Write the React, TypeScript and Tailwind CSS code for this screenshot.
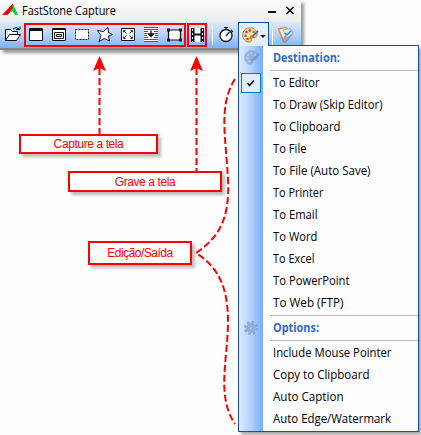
import type { ReactNode } from "react";

function Icon({ children, w = 23 }: { children: ReactNode; w?: number }) {
  return (
    <svg width={w} height={26} viewBox={`0 0 ${w} 26`} fill="none" stroke="#111" className="block shrink-0">
      {children}
    </svg>
  );
}

const destinations = [
  { label: "To Editor", len: 46.5 },
  { label: "To Draw (Skip Editor)", len: 109.5 },
  { label: "To Clipboard", len: 67.5 },
  { label: "To File", len: 33.5 },
  { label: "To File (Auto Save)", len: 97.5 },
  { label: "To Printer", len: 50.5 },
  { label: "To Email", len: 44.5 },
  { label: "To Word", len: 44.5 },
  { label: "To Excel", len: 41.5 },
  { label: "To PowerPoint", len: 76.5 },
  { label: "To Web (FTP)", len: 70.5 },
];

const options = [
  { label: "Include Mouse Pointer", len: 118.5 },
  { label: "Copy to Clipboard", len: 96.5 },
  { label: "Auto Caption", len: 70.5 },
  { label: "Auto Edge/Watermark", len: 118 },
];

function Label({ text, len, bold = false }: { text: string; len: number; bold?: boolean }) {
  return (
    <svg width={140} height={22} className="block">
      <text x={0} y={15} textLength={len} lengthAdjust="spacingAndGlyphs" fill={bold ? "#316ac5" : "#000"} fontSize={12} fontWeight={bold ? 700 : 400}>
        {text}
      </text>
    </svg>
  );
}

function Palette({ muted = false }: { muted?: boolean }) {
  const spot = (color: string) => (muted ? "#a9c6ea" : color);
  return (
    <g opacity={muted ? 0.6 : 1}>
      <path
        d="M8 .8C3.500.8.700 4 .700 8c0 4.200 3 7 6.300 7 2.200 0 2.600-1 2.300-2.400-.2-1.300.6-2 1.700-1.900 2.600.2 4-1.200 4-3.500C15 3.500 12.200.8 8 .8Z"
        fill={muted ? "#7f9dc6" : "#fbe08d"}
        stroke={muted ? "#7695bf" : "#c4703a"}
      />
      <g stroke="none">
        <circle cx="4.500" cy="5" r="1.300" fill={spot("#e63c27")} />
        <circle cx="8" cy="3.500" r="1.300" fill={spot("#8a41c7")} />
        <circle cx="11.800" cy="5" r="1.300" fill={spot("#45a63c")} />
        <circle cx="3.500" cy="8.800" r="1.300" fill={spot("#3281d2")} />
        <circle cx="5.500" cy="12" r="1.300" fill={spot("#e63c27")} />
      </g>
      <path d="m10 10 6-6" stroke={muted ? "#5c7ba4" : "#5458bb"} strokeWidth="1.700" />
      <path d="m7.500 11.500 1.500-3 2.500 2Z" fill={muted ? "#5c7ba4" : "#ee8427"} stroke={muted ? "#5c7ba4" : "#d85f17"} strokeWidth=".8" />
    </g>
  );
}

function CaptureWindow() {
  return (
    <div className="h-[50px] w-[301px] bg-white shadow-[3px_3px_3px_#999]">
      <div className="flex h-[22px] items-center bg-gradient-to-b from-[#fcfcfc] to-[#ededed]">
        <svg width="22" height="22" className="block">
          <path d="M2 15 13 3.500v5L7.500 15Z" fill="#f00000" />
          <path d="m13 4 5 11h-3l-2.500-4-2 2 1.500-4Z" fill="#08d52b" />
        </svg>
        <svg width="240" height="22" className="block">
          <text x="0" y="14.500" fontSize="12" textLength="94" lengthAdjust="spacingAndGlyphs">FastStone Capture</text>
        </svg>
        <svg width="39" height="22" className="block" stroke="#111" strokeWidth="2">
          <path d="M6 12h8" />
          <path d="m24.500 7 7 7m0-7-7 7" strokeWidth="1.600" />
        </svg>
      </div>
      <div className="flex h-[28px] border-b-2 border-[#858585] bg-gradient-to-b from-[#dceaff] via-[#b6d2fb] to-[#7fb1f6] pl-px">
        <Icon>
          <path d="M4.500 18.500v-11h5l2 2h5v3" fill="#fff" />
          <path d="m4.500 18.500 4-6h11l-4 6Z" fill="#fff" />
          <path d="M12 7q3-3 6 0m-3 .5h4v-3" />
        </Icon>
        <Icon>
          <path d="M5.500 6.500h13v12h-13z" fill="#fff" />
          <path d="M5 7.500h14M5 8.500h14" />
        </Icon>
        <Icon>
          <path d="M5.500 6.500h13v12h-13z" fill="#fff" />
          <path d="M5 7.500h14M7.500 10.500h9v6h-9zM9.500 12.500h5v2h-5z" />
        </Icon>
        <Icon>
          <path d="M5.500 7.500h13v10h-13z" fill="#fff" strokeDasharray="2 1" />
        </Icon>
        <Icon>
          <path d="m4.500 8.500 6 1 4.500-4 .5 5 4 2-4 1.500 1 5-5-2.500-5.500 3 2-6Z" fill="#fff" />
        </Icon>
        <Icon>
          <path d="M5.500 6.500h13v12h-13z" fill="#fff" />
          <path d="M7.500 10.500v-2h2m5 0h2v2m0 4v2h-2m-5 0h-2v-2M8 9l2.500 2.500M16 9l-2.500 2.500M8 16l2.500-2.500M16 16l-2.500-2.500" strokeWidth=".85" />
        </Icon>
        <Icon>
          <path d="M5 5h14v15H5z" fill="#fff" stroke="none" />
          <path d="M5 5.500h14M5 7.500h14M5 9.500h4m6 0h4M5 11.500h3m8 0h3M5 13.500h3m8 0h3M5 15.500h4m6 0h4M5 17.500h14M5 19.500h14" strokeWidth=".7" />
          <path d="M12 8.500V13m-2.500-1 2.500 2.500 2.500-2.500Z" fill="#111" strokeWidth="1.300" />
        </Icon>
        <Icon>
          <path d="M6.500 8h12v10h-12z" fill="#fff" strokeWidth="1.200" />
          <path d="M5 6.500h3v3H5zm12 0h3v3h-3zM5 16.500h3v3H5zm12 0h3v3h-3z" fill="#111" stroke="none" />
        </Icon>
        <Icon>
          <path d="M6 6h13v14H6z" fill="#111" stroke="none" />
          <path d="M9.500 6h6v5.500h-6zm0 7.500h6V20h-6z" fill="#fff" stroke="none" />
          <path d="M7.500 7v13m10-13v13" stroke="#fff" strokeDasharray="2 2" />
        </Icon>
        <Icon w={7}><path d="M4.500 4v19" stroke="#fff" /></Icon>
        <Icon>
          <circle cx="11" cy="13.500" r="6" fill="#fff" strokeWidth="1.300" />
          <path d="M9 5.500h4M11 6v2m0 6 3.500-4m1.500-2 2 2" strokeWidth="1.200" />
        </Icon>
        <div className="h-[26px] w-[31px] border-x border-t border-[#1c4c9c] bg-[#e2effd]">
          <svg width="29" height="25" className="block">
            <g transform="translate(3 4)" fill="none"><Palette /></g>
            <path d="M21 12h6l-3 3Z" fill="#111" />
          </svg>
        </div>
        <Icon w={6}><path d="M3.500 4v19" stroke="#fff" /></Icon>
        <Icon>
          <path d="m3.500 7 5 13h2.500l7-9-2.500-4-4 1-2-2Z" fill="#b49ade" stroke="#9a72bd" />
          <path d="m3.500 7 4.500 10 7-7.500-4.500-4Z" fill="#e5f3ff" stroke="#ee8b1e" strokeWidth="1.200" />
          <path d="m8 8 7-1.500L18 11l-6 5Z" fill="#d3ecff" stroke="#7aabe9" strokeWidth=".8" />
          <path d="m10 11 2 2 4-4" stroke="#238fa3" strokeWidth="1.400" />
        </Icon>
      </div>
    </div>
  );
}

function Menu() {
  return (
    <div className="absolute left-[238px] top-[45px] flex h-[387px] w-[181px] border border-[#1c4c9c] bg-[#fdfdfd] shadow-[3px_3px_3px_#aaa]">
      <div className="w-[24px] shrink-0 bg-gradient-to-r from-[#dceaff] via-[#b5d2fb] to-[#74adf9]">
        <svg width="24" height="385" className="block" fill="none">
          <g transform="translate(5 4) scale(.94)"><Palette muted /></g>
          <rect x="2.500" y="27.500" width="19" height="19" fill="#e1eef9" stroke="#0078d7" />
          <path d="m8.500 37 2 2.500 4.500-5" stroke="#111" strokeWidth="1.500" />
          <g transform="translate(12 282)" stroke="#86a7d2">
            <circle r="6" strokeWidth="2" strokeDasharray="2.700 2" />
            <circle r="4.200" fill="#93b5e3" strokeWidth="1.200" />
            <circle r="1.800" fill="#abc9f0" />
          </g>
        </svg>
      </div>
      <div className="flex min-w-0 flex-1 flex-col pl-[7px]">
        <div className="h-[24px] pl-[3px] pt-px"><Label text="Destination:" len={67} bold /></div>
        <div className="border-t border-[#bababa] pb-px pt-px">
          {destinations.map((d) => <div key={d.label} className="h-[22px] pl-[3px]"><Label text={d.label} len={d.len} /></div>)}
        </div>
        <div className="h-[26px] border-y border-[#bababa] pl-[3px] pt-px"><Label text="Options:" len={46} bold /></div>
        <div className="pt-px">
          {options.map((d) => <div key={d.label} className="h-[22px] pl-[3px]"><Label text={d.label} len={d.len} /></div>)}
        </div>
      </div>
      <div className="absolute left-0 top-[-1px] h-px w-[29px] bg-[#e2effd]" />
    </div>
  );
}

export default function App() {
  return (
    <main className="relative h-[435px] w-[421px] overflow-hidden bg-[#fdfdfd] font-['Open_Sans','Noto_Sans',sans-serif]">
      <CaptureWindow />
      <div className="absolute left-[24px] top-[23px] h-[24px] w-[162px] border-2 border-[#f00]" />
      <div className="absolute left-[187px] top-[23px] h-[24px] w-[20px] border-2 border-[#f00]" />
      <svg className="absolute left-0 top-0" width="421" height="435" fill="none" stroke="#f00" strokeWidth="2" strokeDasharray="7 3">
        <path d="M99.500 68v66M196.500 68v103" />
        <path d="M235 79C218 106 226 137 228 180 230 220 218 238 196 253 219 267 228 289 228 321 228 359 216 396 235 424" />
        <g fill="#f00" stroke="none">
          <path d="m99.500 56 6.500 15-6.500-3-6.500 3ZM196.500 56l6.500 15-6.500-3-6.500 3Z" />
        </g>
      </svg>
      <div className="absolute left-[19px] top-[134px] flex h-[20px] w-[139px] items-center justify-center border-2 border-[#f00] bg-white font-['Liberation_Sans',sans-serif] text-[12px] tracking-[-0.4px] text-[#f00] shadow-[3px_3px_3px_#bbb]">Capture a tela</div>
      <div className="absolute left-[68px] top-[171px] flex h-[21px] w-[154px] items-center justify-center border-2 border-[#f00] bg-white font-['Liberation_Sans',sans-serif] text-[12px] tracking-[-0.4px] text-[#f00] shadow-[3px_3px_3px_#bbb]">Grave a tela</div>
      <div className="absolute left-[88px] top-[241px] flex h-[24px] w-[104px] items-center justify-center border-2 border-[#f00] bg-white font-['Liberation_Sans',sans-serif] text-[12px] tracking-[-0.5px] text-[#f00] shadow-[3px_3px_3px_#bbb]">Edição/Saída</div>
      <Menu />
    </main>
  );
}
